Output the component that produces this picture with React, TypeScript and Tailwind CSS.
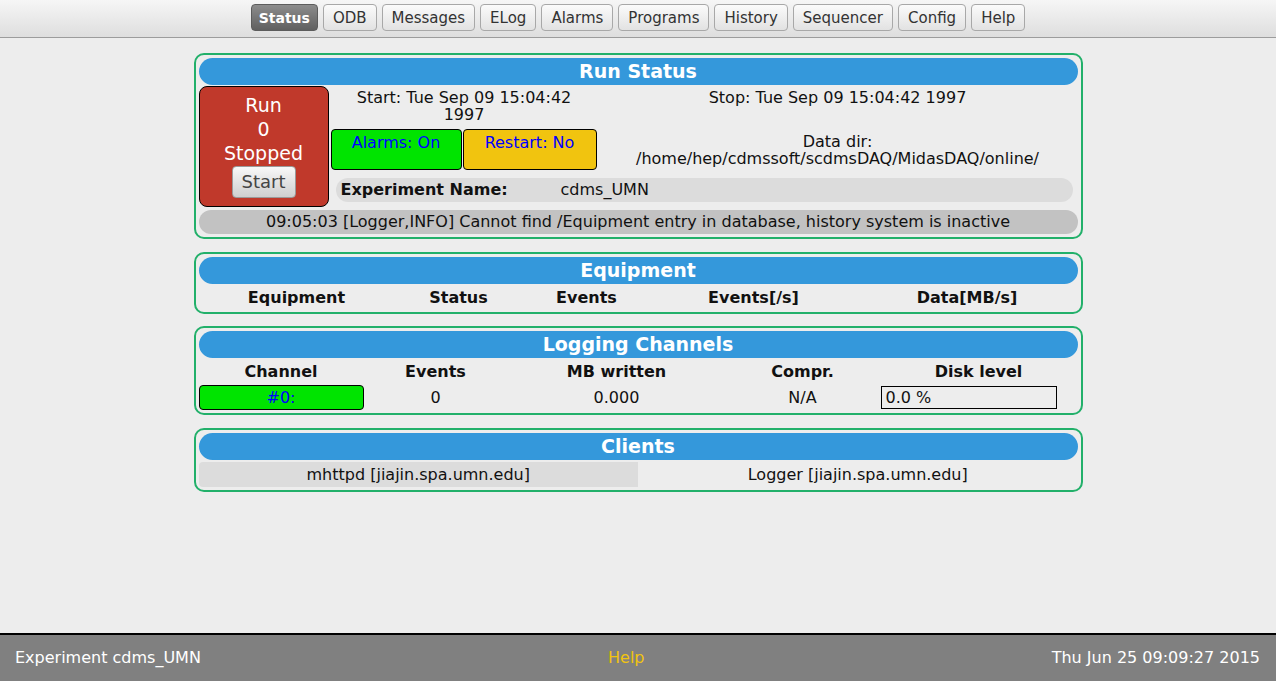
const navItems = [
  "Status",
  "ODB",
  "Messages",
  "ELog",
  "Alarms",
  "Programs",
  "History",
  "Sequencer",
  "Config",
  "Help",
];

function Panel({ title, children, className = "" }: { title: string; children: React.ReactNode; className?: string }) {
  return (
    <div className={`mx-auto w-[889px] rounded-[10px] border-2 border-[#22b06a] p-[3px] ${className}`}>
      <div className="flex h-[27px] items-center justify-center rounded-full bg-[#3498db] text-[19px] font-bold leading-none text-white">
        {title}
      </div>
      {children}
    </div>
  );
}

function NavBar() {
  return (
    <div className="flex h-[38px] shrink-0 items-start justify-center gap-[5px] border-b border-[#9c9c9c] bg-gradient-to-b from-[#f6f6f6] to-[#dedede] pt-[4px]">
      {navItems.map((item) =>
        item === "Status" ? (
          <div
            key={item}
            className="flex h-[27px] items-center rounded-[4px] border border-[#5c5c5c] bg-gradient-to-b from-[#8c8c8c] to-[#606060] px-[7px] pt-[2px] text-[14px] font-bold text-white"
          >
            {item}
          </div>
        ) : (
          <div
            key={item}
            className="flex h-[27px] items-center rounded-[4px] border border-[#a8a8a8] bg-gradient-to-b from-[#fbfbfb] to-[#e2e2e2] px-[9px] pt-[2px] text-[15px] text-[#333]"
          >
            {item}
          </div>
        )
      )}
    </div>
  );
}

function RunStatus() {
  return (
    <Panel title="Run Status" className="mt-[15px]">
      <div className="mt-[1px] flex">
        <div className="flex h-[121px] w-[130px] shrink-0 flex-col items-center rounded-[8px] border border-black bg-[#c0392b] pt-[6px] text-[19px] leading-[24px] text-white">
          <div>Run</div>
          <div>0</div>
          <div>Stopped</div>
          <div className="mt-[1px] flex h-[32px] w-[64px] items-center justify-center rounded-[4px] border border-[#9a9a9a] bg-gradient-to-b from-[#f8f8f8] to-[#cfcfcf] text-[18px] text-[#444]">
            Start
          </div>
        </div>
        <div className="ml-[2px] flex-1">
          <div className="grid h-[41px] grid-cols-[267px_1fr] leading-[17px]">
            <div className="pt-[3px] text-center">
              Start: Tue Sep 09 15:04:42
              <br />
              1997
            </div>
            <div className="pt-[3px] text-center">Stop: Tue Sep 09 15:04:42 1997</div>
          </div>
          <div className="mt-[2px] grid h-[41px] grid-cols-[131px_134px_1fr] gap-[1px] leading-[17px]">
            <div className="rounded-[4px] border border-black bg-[#00e400] pt-[4px] text-center text-[#0000ff]">
              Alarms: On
            </div>
            <div className="rounded-[4px] border border-black bg-[#f1c40f] pt-[4px] text-center text-[#0000ff]">
              Restart: No
            </div>
            <div className="pt-[4px] text-center">
              Data dir:
              <br />
              /home/hep/cdmssoft/scdmsDAQ/MidasDAQ/online/
            </div>
          </div>
          <div className="mx-[5px] mt-[8px] flex h-[24px] items-center rounded-full bg-[#dcdcdc] pl-[5px]">
            <span className="w-[220px] font-bold">Experiment Name:</span>
            <span>cdms_UMN</span>
          </div>
        </div>
      </div>
      <div className="mt-[3px] flex h-[24px] items-center justify-center rounded-full bg-[#c2c2c2]">
        09:05:03 [Logger,INFO] Cannot find /Equipment entry in database, history system is inactive
      </div>
    </Panel>
  );
}

function Equipment() {
  return (
    <Panel title="Equipment" className="mt-[13px]">
      <div className="grid h-[25px] grid-cols-[196px_128px_128px_206px_1fr] items-center pt-[2px] text-center font-bold">
        <div>Equipment</div>
        <div>Status</div>
        <div>Events</div>
        <div>Events[/s]</div>
        <div>Data[MB/s]</div>
      </div>
    </Panel>
  );
}

function Logging() {
  return (
    <Panel title="Logging Channels" className="mt-[12px]">
      <div className="grid h-[26px] grid-cols-[165px_144px_218px_154px_1fr] items-center pt-[2px] text-center font-bold">
        <div>Channel</div>
        <div>Events</div>
        <div>MB written</div>
        <div>Compr.</div>
        <div>Disk level</div>
      </div>
      <div className="mt-[1px] grid h-[25px] grid-cols-[165px_144px_218px_154px_1fr] items-center text-center">
        <div className="flex h-[25px] items-center justify-center rounded-[4px] border border-black bg-[#00e400] text-[#0000ff]">
          #0:
        </div>
        <div>0</div>
        <div>0.000</div>
        <div>N/A</div>
        <div className="ml-[1px] flex h-[23px] w-[176px] items-center border border-black pl-[4px] text-left">0.0 %</div>
      </div>
    </Panel>
  );
}

function Clients() {
  return (
    <Panel title="Clients" className="mt-[13px]">
      <div className="mt-[2px] grid h-[25px] grid-cols-2 items-center text-center">
        <div className="flex h-full items-center justify-center rounded-l-[4px] bg-[#dcdcdc]">mhttpd [jiajin.spa.umn.edu]</div>
        <div>Logger [jiajin.spa.umn.edu]</div>
      </div>
    </Panel>
  );
}

export default function App() {
  return (
    <div className="flex h-screen flex-col bg-[#ededed] font-['DejaVu_Sans',Verdana,sans-serif] text-[16px] text-[#111]">
      <NavBar />
      <div className="flex-1">
        <RunStatus />
        <Equipment />
        <Logging />
        <Clients />
      </div>
      <div className="flex h-[48px] shrink-0 items-center justify-between border-t-2 border-black bg-[#808080] pl-[15px] pr-[16px] text-white">
        <span>Experiment cdms_UMN</span>
        <span className="text-[#f1c40f]">Help</span>
        <span>Thu Jun 25 09:09:27 2015</span>
      </div>
    </div>
  );
}
